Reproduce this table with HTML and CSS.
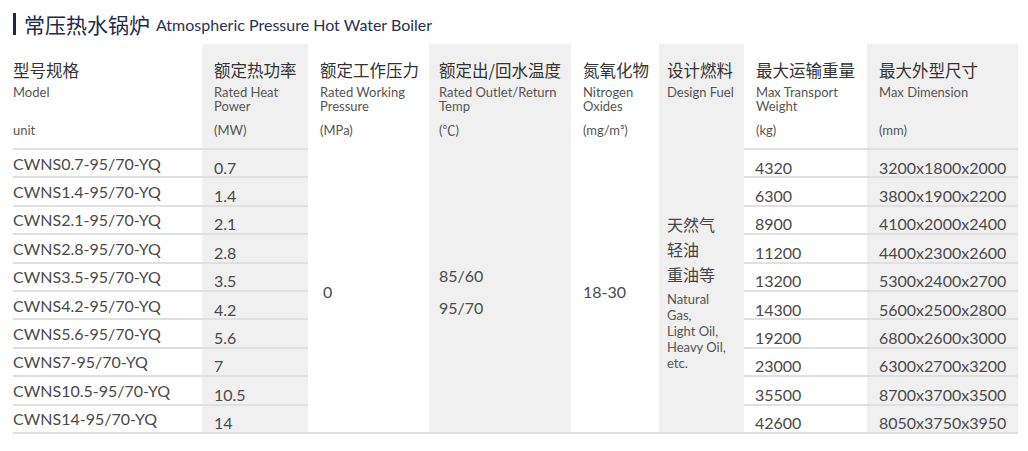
FILE: index.html
```html
<!DOCTYPE html>
<html lang="zh">
<head>
<meta charset="utf-8">
<title>常压热水锅炉</title>
<link rel="stylesheet" href="styles.css">
</head>
<body>
<h1 class="title"><span class="cn">常压热水锅炉</span><span class="en">Atmospheric Pressure Hot Water Boiler</span></h1>
<div class="grid">
  <div class="hd m"><span class="cn">型号规格</span><span class="en">Model</span></div>
  <div class="hd g"><span class="cn">额定热功率</span><span class="en">Rated Heat<br>Power</span></div>
  <div class="hd"><span class="cn">额定工作压力</span><span class="en">Rated Working<br>Pressure</span></div>
  <div class="hd g t"><span class="cn">额定出/回水温度</span><span class="en">Rated Outlet/Return<br>Temp</span></div>
  <div class="hd"><span class="cn">氮氧化物</span><span class="en">Nitrogen<br>Oxides</span></div>
  <div class="hd g f"><span class="cn">设计燃料</span><span class="en">Design Fuel</span></div>
  <div class="hd"><span class="cn">最大运输重量</span><span class="en">Max Transport<br>Weight</span></div>
  <div class="hd g"><span class="cn">最大外型尺寸</span><span class="en">Max Dimension</span></div>

  <div class="unit m">unit</div>
  <div class="unit g">(MW)</div>
  <div class="unit">(MPa)</div>
  <div class="unit g t">(℃)</div>
  <div class="unit">(mg/m³)</div>
  <div class="unit">(kg)</div>
  <div class="unit g">(mm)</div>

  <div class="span p">0</div>
  <div class="span g t temp"><span>85/60</span><span>95/70</span></div>
  <div class="span nox">18-30</div>
  <div class="span g f fuel">
    <span class="fcn">天然气<br>轻油<br>重油等</span>
    <span class="fen">Natural<br>Gas,<br>Light Oil,<br>Heavy Oil,<br>etc.</span>
  </div>

  <div class="c m">CWNS0.7-95/70-YQ</div><div class="c g v">0.7</div><div class="c v w">4320</div><div class="c g v">3200x1800x2000</div>
  <div class="c m">CWNS1.4-95/70-YQ</div><div class="c g v">1.4</div><div class="c v w">6300</div><div class="c g v">3800x1900x2200</div>
  <div class="c m">CWNS2.1-95/70-YQ</div><div class="c g v">2.1</div><div class="c v w">8900</div><div class="c g v">4100x2000x2400</div>
  <div class="c m">CWNS2.8-95/70-YQ</div><div class="c g v">2.8</div><div class="c v w">11200</div><div class="c g v">4400x2300x2600</div>
  <div class="c m">CWNS3.5-95/70-YQ</div><div class="c g v">3.5</div><div class="c v w">13200</div><div class="c g v">5300x2400x2700</div>
  <div class="c m">CWNS4.2-95/70-YQ</div><div class="c g v">4.2</div><div class="c v w">14300</div><div class="c g v">5600x2500x2800</div>
  <div class="c m">CWNS5.6-95/70-YQ</div><div class="c g v">5.6</div><div class="c v w">19200</div><div class="c g v">6800x2600x3000</div>
  <div class="c m">CWNS7-95/70-YQ</div><div class="c g v">7</div><div class="c v w">23000</div><div class="c g v">6300x2700x3200</div>
  <div class="c m">CWNS10.5-95/70-YQ</div><div class="c g v">10.5</div><div class="c v w">35500</div><div class="c g v">8700x3700x3500</div>
  <div class="c m">CWNS14-95/70-YQ</div><div class="c g v">14</div><div class="c v w">42600</div><div class="c g v">8050x3750x3950</div>
</div>
</body>
</html>
```

FILE: styles.css
```css
* { box-sizing: border-box; }
body {
  margin: 0;
  background: #fff;
  font-family: Lato, "Noto Sans CJK SC", sans-serif;
  color: #4a4a4a;
}
.title {
  display: flex;
  align-items: center;
  height: 22px;
  margin: 13px 0 9px 13px;
  padding-left: 8px;
  border-left: 3px solid #1f2648;
  font-weight: normal;
}
.title .cn {
  font-family: "Noto Sans CJK SC", sans-serif;
  font-size: 21px;
  color: #222a4a;
}
.title .en {
  font-size: 16px;
  margin-left: 6px;
  color: #2b3253;
}
.grid {
  display: grid;
  grid-template-columns: 189px 106px 121px 142px 88px 85px 123px 151px;
  grid-template-rows: auto auto repeat(10, 28.4px);
  width: 1005px;
  margin-left: 13px;
  border-bottom: 2px solid #e0e0e0;
}
.g { background: #f0f0f0; }
.hd { padding: 15px 4px 0 12px; }
.hd.m, .unit.m, .c.m { padding-left: 0; }
.hd.t, .unit.t, .span.t { padding-left: 10px; }
.hd.f, .span.f { padding-left: 8px; }
.hd .cn {
  display: block;
  font-family: "Noto Sans CJK SC", sans-serif;
  font-size: 16.5px;
  line-height: 22px;
  color: #333;
  margin-bottom: 4px;
}
.hd .en {
  display: block;
  font-size: 13px;
  line-height: 14px;
  color: #555;
}
.hd.f { grid-row: 1 / 3; grid-column: 6; }
.unit {
  padding: 10px 4px 11px 12px;
  font-size: 13px;
  line-height: 14px;
  color: #555;
}
.span {
  grid-row: 3 / 13;
  display: flex;
  flex-direction: column;
  justify-content: center;
  padding-left: 12px;
  font-size: 16px;
  padding-top: 4px;
}
.span.p { grid-column: 3; padding-left: 15px; }
.span.temp { grid-column: 4; line-height: 32px; }
.span.nox { grid-column: 5; }
.span.fuel { grid-column: 6; }
.fcn {
  font-family: "Noto Sans CJK SC", sans-serif;
  font-size: 16px;
  line-height: 25px;
  color: #444;
}
.fen {
  font-size: 13px;
  line-height: 16px;
  margin-top: 4px;
  color: #555;
}
.c {
  display: flex;
  align-items: center;
  border-top: 2px solid #e0e0e0;
  padding-left: 12px;
  font-size: 16px;
  white-space: nowrap;
}
.c.v { padding-top: 8px; }
.c.m { grid-column: 1; }
.c.w { grid-column: 7; padding-left: 11px; }
```
